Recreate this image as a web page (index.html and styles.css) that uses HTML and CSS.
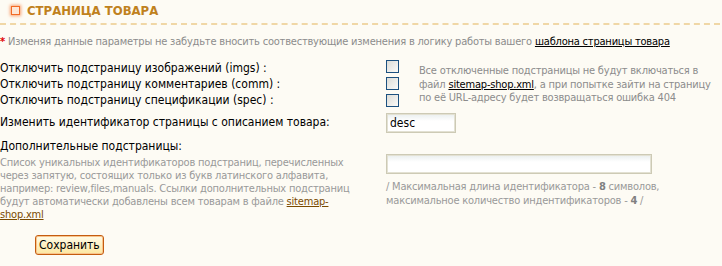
FILE: index.html
```html
<!DOCTYPE html>
<html lang="ru">
<head>
    <meta charset="UTF-8">
    <title>Страница товара</title>
    <link rel="stylesheet" href="styles.css">
</head>
<body>
    <div class="page">
        <h2 class="title"><span class="dot"></span>СТРАНИЦА ТОВАРА</h2>

        <p class="note"><span class="star">*</span> Изменяя данные параметры не забудьте вносить соотвествующие изменения в логику работы вашего <a href="#">шаблона страницы товара</a></p>

        <form class="settings">
            <div class="row">
                <div class="labels">
                    <div class="label">Отключить подстраницу изображений (imgs) :</div>
                    <div class="label">Отключить подстраницу комментариев (comm) :</div>
                    <div class="label">Отключить подстраницу спецификации (spec) :</div>
                </div>
                <div class="field field-checks">
                    <div class="checks">
                        <span class="check"></span>
                        <span class="check"></span>
                        <span class="check"></span>
                    </div>
                    <div class="hint">Все отключенные подстраницы не будут включаться в файл <a href="#">sitemap-shop.xml</a>, а при попытке зайти на страницу по её URL-адресу будет возвращаться ошибка 404</div>
                </div>
            </div>

            <div class="row row-id">
                <div class="label">Изменить идентификатор страницы с описанием товара:</div>
                <div class="field"><input class="text short" type="text" value="desc"></div>
            </div>

            <div class="row row-extra">
                <div class="labels">
                    <div class="label">Дополнительные подстраницы:</div>
                    <div class="desc">Список уникальных идентификаторов подстраниц, перечисленных через запятую, состоящих только из букв латинского алфавита, например: review,files,manuals. Ссылки дополнительных подстраниц будут автоматически добавлены всем товарам в файле <a href="#">sitemap-shop.xml</a></div>
                </div>
                <div class="field">
                    <input class="text long" type="text" value="">
                    <div class="limits">/ Максимальная длина идентификатора - <b>8</b> символов,<br>максимальное количество индентификаторов - <b>4</b> /</div>
                </div>
            </div>

            <div class="buttons">
                <button type="button" class="save">Сохранить</button>
            </div>
        </form>
    </div>
</body>
</html>
```

FILE: styles.css
```css
body {
    margin: 0;
    background-color: #fdfbf4;
    font-family: "DejaVu Sans Condensed", "DejaVu Sans", sans-serif;
    font-size: 11px;
    color: #000;
}

.page {
    width: 720px;
}

/* header */
.title {
    margin: 0;
    padding: 3px 0 5px 11px;
    border-bottom: 2px dashed #f0d7a6;
    color: #c0811d;
    font-size: 13px;
    font-weight: bold;
    display: flex;
    align-items: center;
    height: 15px;
}

.dot {
    width: 7px;
    height: 7px;
    margin-right: 7px;
    background-color: #fde6d6;
    border: 1px solid #f26a25;
    box-shadow: 0 0 3px 1px #f8a070;
}

.note {
    margin: 10px 0 0;
    color: #8c8c8c;
    line-height: 14px;
    letter-spacing: -0.2px;
}

.star {
    color: #e00000;
    font-weight: bold;
}

.note a {
    color: #000;
}

/* form */
.settings {
    margin-top: 11px;
}

.row {
    display: flex;
}

.labels {
    width: 386px;
}

.row > .label {
    width: 386px;
}

.label {
    font-size: 12px;
    line-height: 16px;
}

.field {
    flex: 1;
}

.field-checks {
    display: flex;
}

.checks {
    display: flex;
    flex-direction: column;
    gap: 4px;
}

.check {
    width: 11px;
    height: 11px;
    border: 1px solid #1c5180;
    background: linear-gradient(135deg, #dcdcd7, #fbfbf9);
}

.hint {
    margin: 4px 0 0 20px;
    color: #8c8c8c;
    line-height: 13.5px;
    width: 300px;
    letter-spacing: -0.2px;
}

.hint a {
    color: #000;
}

.row-id {
    margin-top: 5px;
}

.row-id .label {
    padding-top: 1px;
}

.row-extra {
    margin-top: 5px;
}

.text {
    box-sizing: border-box;
    height: 20px;
    margin: 0;
    border: 1px solid #cdcab5;
    outline: 1px solid #e3e1d3;
    outline-offset: -2px;
    background: linear-gradient(#e9eeee, #fff 7px);
    font-family: "DejaVu Sans Condensed", "DejaVu Sans", sans-serif;
    font-size: 12px;
    padding: 0 3px;
}

.short {
    width: 70px;
}

.long {
    width: 266px;
    margin-top: 16px;
}

.desc {
    color: #999;
    line-height: 13px;
    width: 350px;
    margin-top: 2px;
    letter-spacing: -0.2px;
}

.desc a {
    color: #7a4a00;
}

.limits {
    color: #999;
    line-height: 14px;
    margin-top: 6px;
    letter-spacing: -0.2px;
}

.limits b {
    color: #808080;
}

.buttons {
    padding: 14px 0 0 35px;
}

.save {
    height: 20px;
    padding: 0 3px;
    border: 1px solid #c45c10;
    border-radius: 3px;
    background: linear-gradient(#fffbe8, #fde7a0);
    box-shadow: inset 0 0 0 1px #f8c48c;
    font-family: "DejaVu Sans Condensed", "DejaVu Sans", sans-serif;
    font-size: 12px;
    color: #000;
}
```
